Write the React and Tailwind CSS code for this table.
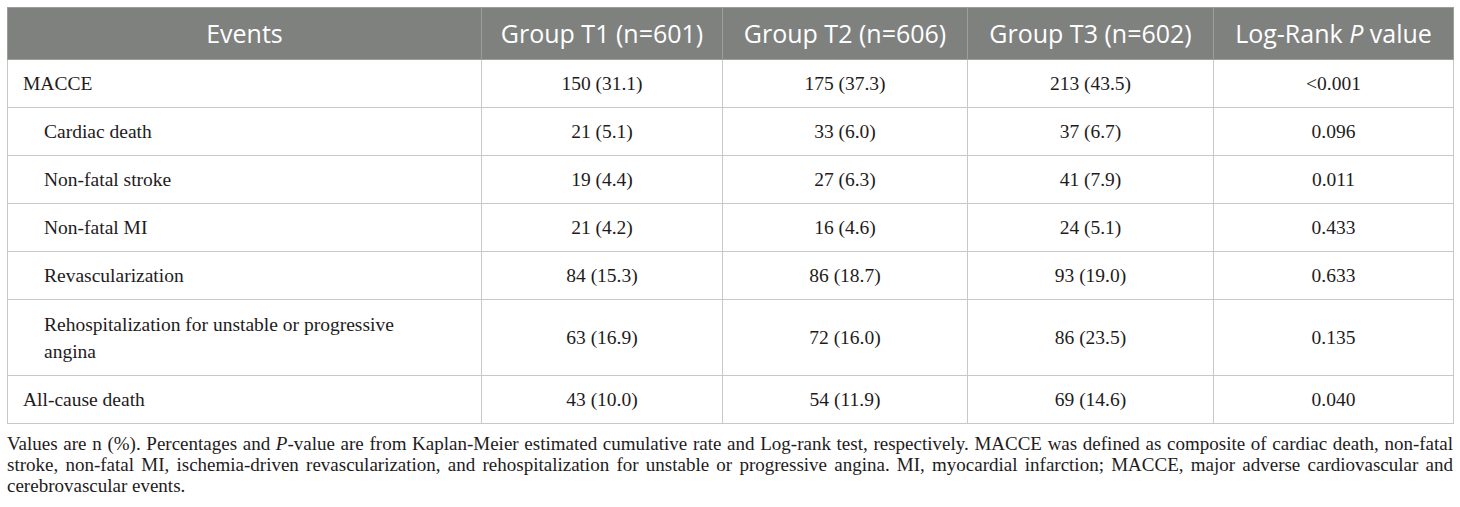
import React from "react";

const rows = [
  { label: "MACCE", indent: false, v: ["150 (31.1)", "175 (37.3)", "213 (43.5)", "<0.001"] },
  { label: "Cardiac death", indent: true, v: ["21 (5.1)", "33 (6.0)", "37 (6.7)", "0.096"] },
  { label: "Non-fatal stroke", indent: true, v: ["19 (4.4)", "27 (6.3)", "41 (7.9)", "0.011"] },
  { label: "Non-fatal MI", indent: true, v: ["21 (4.2)", "16 (4.6)", "24 (5.1)", "0.433"] },
  { label: "Revascularization", indent: true, v: ["84 (15.3)", "86 (18.7)", "93 (19.0)", "0.633"] },
  {
    label: (
      <>
        Rehospitalization for unstable or progressive
        <br />
        angina
      </>
    ),
    indent: true,
    tall: true,
    v: ["63 (16.9)", "72 (16.0)", "86 (23.5)", "0.135"],
  },
  { label: "All-cause death", indent: false, v: ["43 (10.0)", "54 (11.9)", "69 (14.6)", "0.040"] },
];

export default function App() {
  return (
    <div className="w-[1460px] h-[507px] bg-white px-[7px] pt-[7px] overflow-hidden">
      <table
        className="table-fixed border-collapse w-[1446px] text-[#1e1b1c]"
        style={{ fontFamily: '"Liberation Serif", "Times New Roman", serif' }}
      >
        <colgroup>
          <col className="w-[474px]" />
          <col className="w-[241px]" />
          <col className="w-[245px]" />
          <col className="w-[246px]" />
          <col className="w-[240px]" />
        </colgroup>
        <thead>
          <tr
            className="bg-[#7f817f] text-white h-[52px] text-[25px] font-normal"
            style={{ fontFamily: '"Open Sans", "Noto Sans", sans-serif' }}
          >
            <th className="font-normal border border-[#9c9e9c] px-2 text-center">Events</th>
            <th className="font-normal border border-[#9c9e9c] px-1 text-center whitespace-nowrap">Group T1 (n=601)</th>
            <th className="font-normal border border-[#9c9e9c] px-1 text-center whitespace-nowrap">Group T2 (n=606)</th>
            <th className="font-normal border border-[#9c9e9c] px-1 text-center whitespace-nowrap">Group T3 (n=602)</th>
            <th className="font-normal border border-[#9c9e9c] px-1 text-center whitespace-nowrap">
              Log-Rank <span className="italic">P</span> value
            </th>
          </tr>
        </thead>
        <tbody className="text-[19.5px] leading-[27px]">
          {rows.map((r, i) => (
            <tr key={i}>
              <td
                className={
                  "border border-[#c8c8c8] pr-3 " +
                  (r.tall ? "py-[10.5px] " : "py-[10px] ") +
                  (r.indent ? "pl-[36px]" : "pl-[15px]")
                }
              >
                {r.label}
              </td>
              {r.v.map((x, j) => (
                <td key={j} className="border border-[#c8c8c8] py-[10px] px-2 text-center">
                  {x}
                </td>
              ))}
            </tr>
          ))}
        </tbody>
      </table>
      <div
        className="w-[1446px] mt-[9px] text-[19px] leading-[21px] text-[#1e1b1c]"
        style={{ fontFamily: '"Liberation Serif", "Times New Roman", serif' }}
      >
        <div className="text-justify [text-align-last:justify]">
          Values are n (%). Percentages and <span className="italic">P</span>-value are from Kaplan-Meier estimated cumulative rate and Log-rank test, respectively. MACCE was defined as composite of cardiac death, non-fatal
        </div>
        <div className="text-justify [text-align-last:justify]">
          stroke, non-fatal MI, ischemia-driven revascularization, and rehospitalization for unstable or progressive angina. MI, myocardial infarction; MACCE, major adverse cardiovascular and
        </div>
        <div>cerebrovascular events.</div>
      </div>
    </div>
  );
}
